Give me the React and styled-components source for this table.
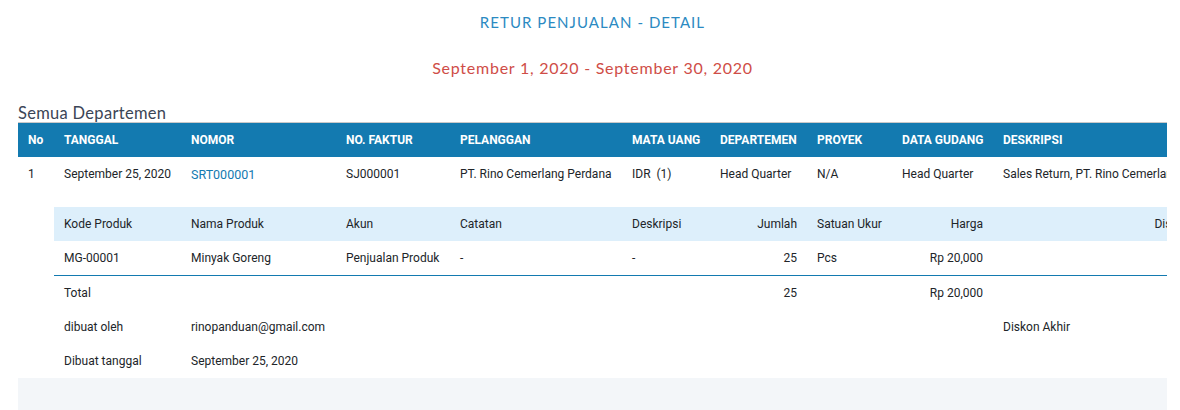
import React from "react";
import styled, { createGlobalStyle } from "styled-components";

const colors = {
  primary: "#137ab0",
  title: "#2b8ac2",
  date: "#cf4d47",
  text: "#212529",
  subHead: "#ddeffb",
  footer: "#f3f6f9",
};

const GlobalStyle = createGlobalStyle`
  html, body {
    margin: 0;
    padding: 0;
    background: #fff;
    font-family: Roboto, "Liberation Sans", sans-serif;
    color: ${colors.text};
  }
`;

const columns = [36, 127, 155, 114, 172, 88, 97, 85, 101, 208, 160];

const header = ["No", "TANGGAL", "NOMOR", "NO. FAKTUR", "PELANGGAN", "MATA UANG", "DEPARTEMEN", "PROYEK", "DATA GUDANG", "DESKRIPSI", ""];

const main = ["1", "September 25, 2020", "SRT000001", "SJ000001", "PT. Rino Cemerlang Perdana", "IDR  (1)", "Head Quarter", "N/A", "Head Quarter", "Sales Return, PT. Rino Cemerlang Perdana", ""];

const App = () => {
  return (
    <>
      <GlobalStyle />
      <Page>
        <Heading>
          <Title>RETUR PENJUALAN - DETAIL</Title>
          <Period>September 1, 2020 - September 30, 2020</Period>
        </Heading>
        <Department>Semua Departemen</Department>
        <Scroller>
          <Table>
            <colgroup>
              {columns.map((w, i) => (
                <col key={i} style={{ width: w }} />
              ))}
            </colgroup>
            <thead>
              <tr>
                {header.map((h, i) => (
                  <Th key={i}>{h}</Th>
                ))}
              </tr>
            </thead>
            <tbody>
              <tr>
                {main.map((v, i) => (
                  <Td key={i}>{i === 2 ? <DocLink>{v}</DocLink> : v}</Td>
                ))}
              </tr>
              <Spacer>
                <td colSpan={11} />
              </Spacer>
              <tr>
                <td />
                <SubTh>Kode Produk</SubTh>
                <SubTh>Nama Produk</SubTh>
                <SubTh>Akun</SubTh>
                <SubTh>Catatan</SubTh>
                <SubTh>Deskripsi</SubTh>
                <SubTh $right>Jumlah</SubTh>
                <SubTh>Satuan Ukur</SubTh>
                <SubTh $right>Harga</SubTh>
                <SubTh $right>Diskon</SubTh>
                <SubTh $right>Total</SubTh>
              </tr>
              <tr>
                <td />
                <Td $line>MG-00001</Td>
                <Td $line>Minyak Goreng</Td>
                <Td $line>Penjualan Produk</Td>
                <Td $line>-</Td>
                <Td $line>-</Td>
                <Td $line $right>25</Td>
                <Td $line>Pcs</Td>
                <Td $line $right>Rp 20,000</Td>
                <Td $line />
                <Td $line />
              </tr>
              <tr>
                <td />
                <Td>Total</Td>
                <Td />
                <Td />
                <Td />
                <Td />
                <Td $right>25</Td>
                <Td />
                <Td $right>Rp 20,000</Td>
                <Td />
                <Td />
              </tr>
              <tr>
                <td />
                <Td>dibuat oleh</Td>
                <Td colSpan={7}>rinopanduan@gmail.com</Td>
                <Td>Diskon Akhir</Td>
                <Td />
              </tr>
              <tr>
                <td />
                <Td>Dibuat tanggal</Td>
                <Td colSpan={9}>September 25, 2020</Td>
              </tr>
              <Footer>
                <td colSpan={11} />
              </Footer>
            </tbody>
          </Table>
        </Scroller>
      </Page>
    </>
  );
};

const Page = styled.div`
  padding: 0 13px 0 18px;
  height: 410px;
  overflow: hidden;
`;
const Heading = styled.div`
  display: flex;
  flex-direction: column;
  align-items: center;
  padding-top: 12px;
`;
const Title = styled.h1`
  margin: 0;
  font-family: Lato, "Open Sans", sans-serif;
  font-weight: 400;
  font-size: 15px;
  line-height: 20px;
  letter-spacing: 1.05px;
  color: ${colors.title};
`;
const Period = styled.h2`
  margin: 26px 0 0;
  font-family: Lato, "Open Sans", sans-serif;
  font-weight: 400;
  font-size: 16px;
  line-height: 20px;
  letter-spacing: 0.75px;
  color: ${colors.date};
`;
const Department = styled.div`
  margin-top: 25px;
  font-family: Lato, "Open Sans", sans-serif;
  font-size: 16.5px;
  line-height: 20px;
  letter-spacing: 0.3px;
  color: #3b4556;
`;
const Scroller = styled.div`
  overflow: hidden;
  border-top: 1px solid #c9c9c9;
  margin-top: -1px;
`;
const Table = styled.table`
  table-layout: fixed;
  border-collapse: collapse;
  width: 1293px;
  font-size: 12px;
`;
const Th = styled.th`
  height: 34px;
  padding: 0 10px;
  background: ${colors.primary};
  color: #fff;
  font-weight: 700;
  text-align: left;
  white-space: nowrap;
  overflow: hidden;
`;
const Td = styled.td`
  height: 34px;
  padding: 0 10px;
  text-align: ${(p) => (p.$right ? "right" : "left")};
  white-space: pre;
  overflow: hidden;
  border-bottom: ${(p) => (p.$line ? `1px solid ${colors.primary}` : "none")};
`;
const DocLink = styled.span`
  color: ${colors.primary};
  font-size: 12.5px;
`;
const Spacer = styled.tr`
  height: 16px;
`;
const SubTh = styled.td`
  height: 34px;
  padding: 0 10px;
  background: ${colors.subHead};
  text-align: ${(p) => (p.$right ? "right" : "left")};
  white-space: nowrap;
  overflow: hidden;
`;
const Footer = styled.tr`
  height: 40px;
  background: ${colors.footer};
`;

export default App;
